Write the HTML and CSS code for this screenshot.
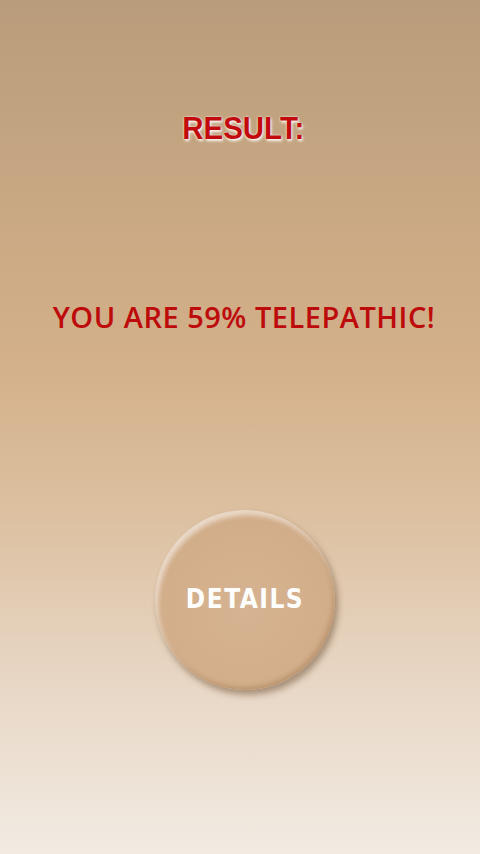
FILE: index.html
```html
<!DOCTYPE html>
<html>
<head>
<meta charset="utf-8">
<link rel="stylesheet" href="styles.css">
</head>
<body>
<main class="screen">
  <h1 class="title"><span class="title-text">RESULT:</span></h1>
  <p class="score">YOU ARE 59% TELEPATHIC!</p>
  <button class="details"><span class="details-text">DETAILS</span></button>
</main>
</body>
</html>
```

FILE: styles.css
```css
html, body {
  margin: 0;
  padding: 0;
}
body {
  width: 480px;
  height: 854px;
  overflow: hidden;
  background: linear-gradient(to bottom, #b99c7b 0%, #c6a682 20%, #d3b089 42%, #dcc0a0 60%, #e7d5c2 78%, #f2ebe3 100%);
}
.screen {
  height: 854px;
  display: flex;
  flex-direction: column;
  align-items: center;
}
.title {
  margin: 108px 0 0 0;
  height: 40px;
  line-height: 40px;
  font-family: "Liberation Sans", Arial, sans-serif;
  font-weight: bold;
  font-size: 32px;
  color: #c20a0c;
  padding-left: 6px;
  text-shadow: 0 0 2px #fff, 1px 2px 3px rgba(255,255,255,0.9);
}
.title-text {
  display: inline-block;
  transform: scaleX(0.92);
}
.score {
  margin: 150px 0 0 0;
  padding-left: 8px;
  font-family: "Open Sans", sans-serif;
  font-weight: 600;
  font-size: 29px;
  line-height: 38px;
  color: #bd0a0a;
  letter-spacing: 0.5px;
}
.details {
  margin: 174px 0 0 10px;
  width: 180px;
  height: 180px;
  border-radius: 50%;
  border: none;
  padding: 0;
  background: radial-gradient(circle at 50% 55%, #d6b391 0%, #d3ae8a 60%, #ceaa86 85%, #c9a580 100%);
  box-shadow:
    inset 3px 5px 5px rgba(255,255,255,0.55),
    inset -2px -3px 4px rgba(120,80,40,0.25),
    3px 5px 6px rgba(90,60,30,0.45);
  display: flex;
  align-items: center;
  justify-content: center;
  cursor: pointer;
}
.details-text {
  font-family: "DejaVu Sans Condensed", "DejaVu Sans", sans-serif;
  font-weight: bold;
  font-size: 26px;
  color: #ffffff;
  letter-spacing: 1.5px;
  margin-top: -2px;
}
```
